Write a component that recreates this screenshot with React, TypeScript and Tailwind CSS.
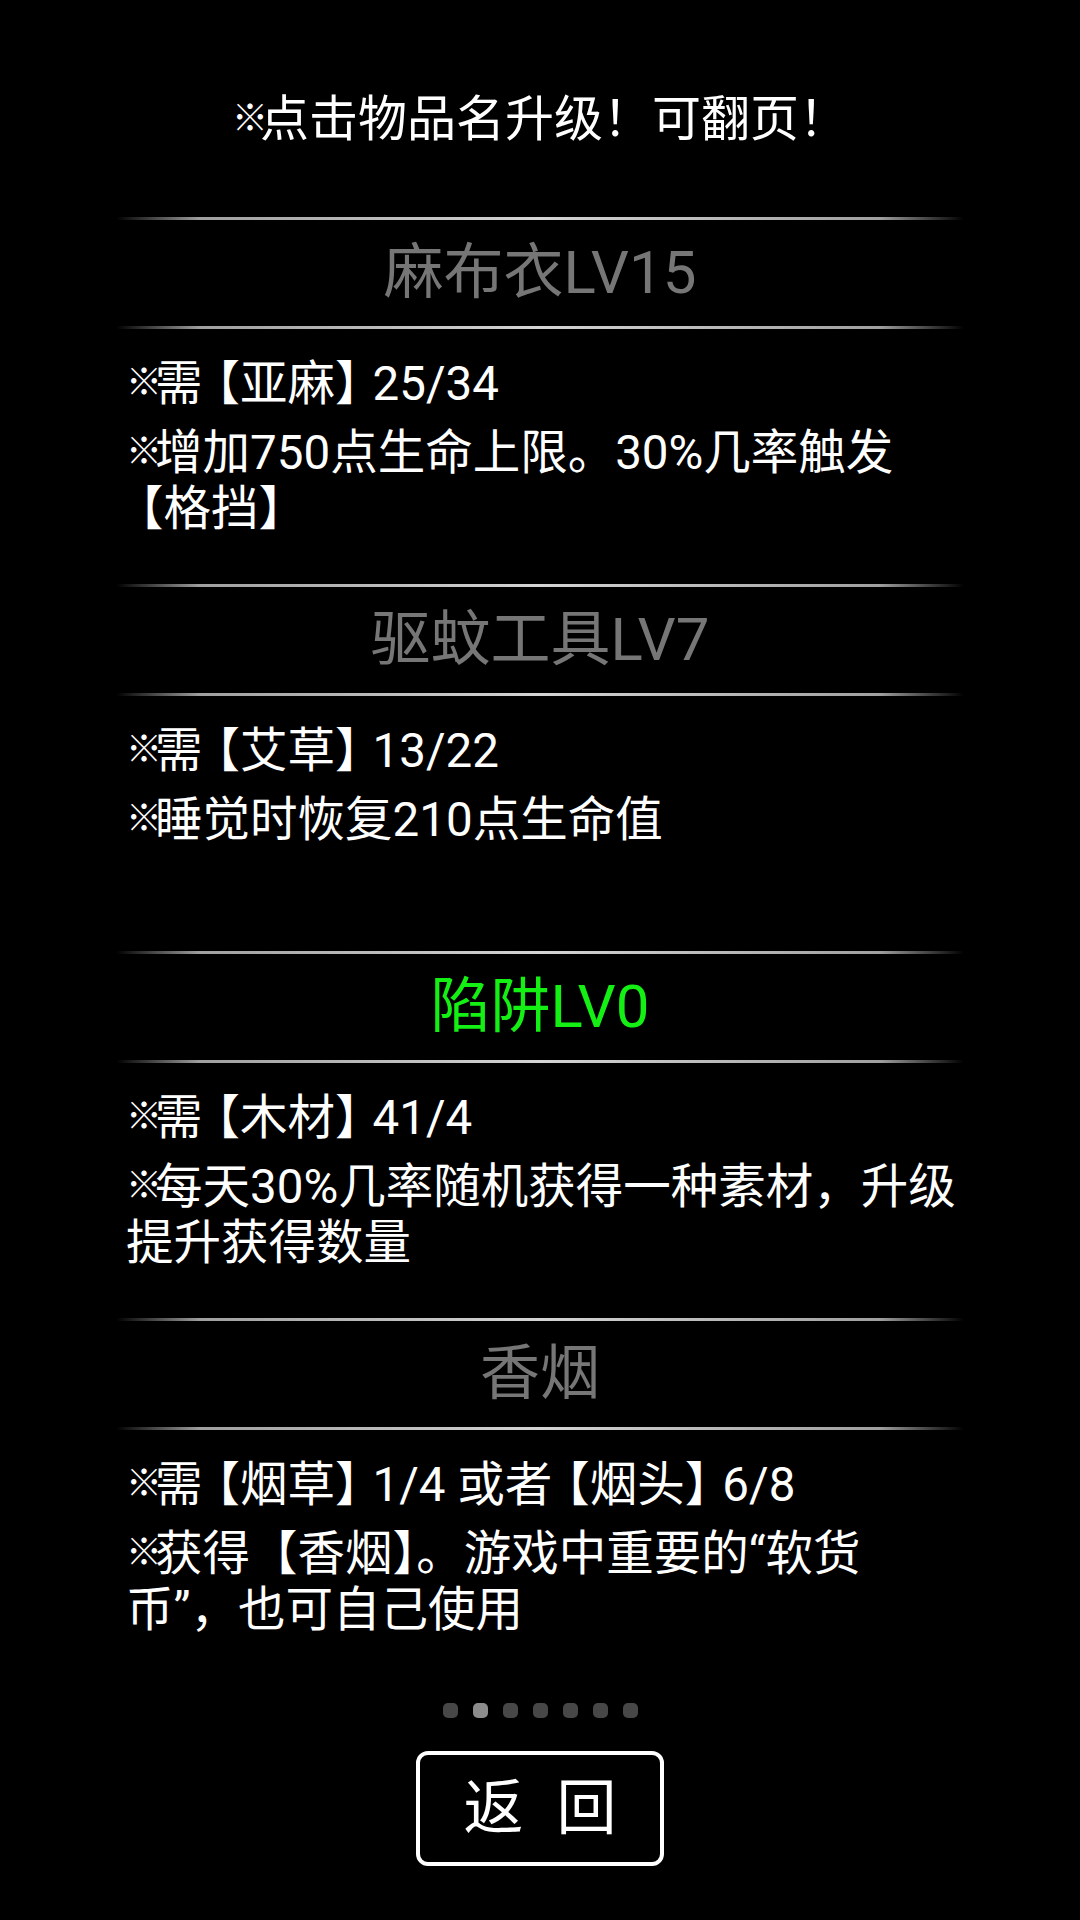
const FONT = "font-['Roboto','Noto_Sans_CJK_SC',sans-serif]";

type Item = {
  title: string;
  active?: boolean;
  paras: string[][];
};

// "[" / "]" = squeezed 【 】, full-width 【 】 stay as they are
const items: Item[] = [
  {
    title: "麻布衣LV15",
    paras: [["※需[亚麻]25/34"], ["※增加750点生命上限。30%几率触发", "[格挡】"]],
  },
  {
    title: "驱蚊工具LV7",
    paras: [["※需[艾草]13/22"], ["※睡觉时恢复210点生命值"]],
  },
  {
    title: "陷阱LV0",
    active: true,
    paras: [["※需[木材]41/4"], ["※每天30%几率随机获得一种素材，升级", "提升获得数量"]],
  },
  {
    title: "香烟",
    paras: [["※需[烟草]1/4 或者[烟头]6/8"], ["※获得【香烟】。游戏中重要的“软货", "币”，也可自己使用"]],
  },
];

function Txt({ s, big }: { s: string; big?: boolean }) {
  const chars = Array.from(s);
  return (
    <>
      {chars.map((ch, i) => {
        if (ch === "※")
          return (
            <span
              key={i}
              className={
                "text-[36px] align-[5px] " + (big ? "tracking-[-8px]" : "tracking-[-7px]")
              }
            >
              ※
            </span>
          );
        if (ch === "[")
          return (
            <span key={i} className={i === 0 ? "ml-[-10px]" : ""}>
              【
            </span>
          );
        if (ch === "]")
          return (
            <span key={i} className="tracking-[-10px]">
              】
            </span>
          );
        // char before a squeezed 【 gives up its trailing space
        if (chars[i + 1] === "[")
          return (
            <span key={i} className="tracking-[-10px]">
              {ch}
            </span>
          );
        return ch;
      })}
    </>
  );
}

function Divider() {
  return (
    <div className="h-[3px] w-full bg-[linear-gradient(90deg,transparent_0%,#a0a0a0_10%,#d4d4d4_50%,#a0a0a0_90%,transparent_100%)]" />
  );
}

function Section({ item }: { item: Item }) {
  return (
    <div className="h-[367px] w-full">
      <Divider />
      <div
        className={
          "flex h-[106px] items-center justify-center text-[60px] leading-none " +
          (item.active ? "text-[#14f014]" : "text-[#767676]")
        }
      >
        {item.title}
      </div>
      <Divider />
      <div className="flex flex-col gap-[12px] pl-[10px] pt-[26px] text-[47.5px] leading-[56px] text-white">
        {item.paras.map((lines, i) => (
          <div key={i}>
            {lines.map((l) => (
              <div key={l} className="whitespace-nowrap">
                <Txt s={l} />
              </div>
            ))}
          </div>
        ))}
      </div>
    </div>
  );
}

export default function App() {
  return (
    <div className={"min-h-screen w-full bg-black " + FONT}>
      <div className="mx-auto flex w-[848px] flex-col items-center pt-[89px]">
        <div className="whitespace-nowrap text-[49px] leading-[60px] text-white">
          <Txt s="※点击物品名升级！可翻页！" big />
        </div>

        <div className="mt-[67px] w-full">
          {items.map((it) => (
            <Section key={it.title} item={it} />
          ))}
        </div>

        <div className="mt-[18px] flex gap-[15px]">
          {[0, 1, 2, 3, 4, 5, 6].map((i) => (
            <div
              key={i}
              className={
                "h-[15px] w-[15px] rounded-[5px] " + (i === 1 ? "bg-[#8c8c8c]" : "bg-[#474747]")
              }
            />
          ))}
        </div>

        <button className="mt-[33px] flex h-[115px] w-[248px] items-center justify-center gap-[33px] rounded-[12px] border-[4px] border-white text-[60px] leading-none text-white">
          <span>返</span>
          <span>回</span>
        </button>
      </div>
    </div>
  );
}
